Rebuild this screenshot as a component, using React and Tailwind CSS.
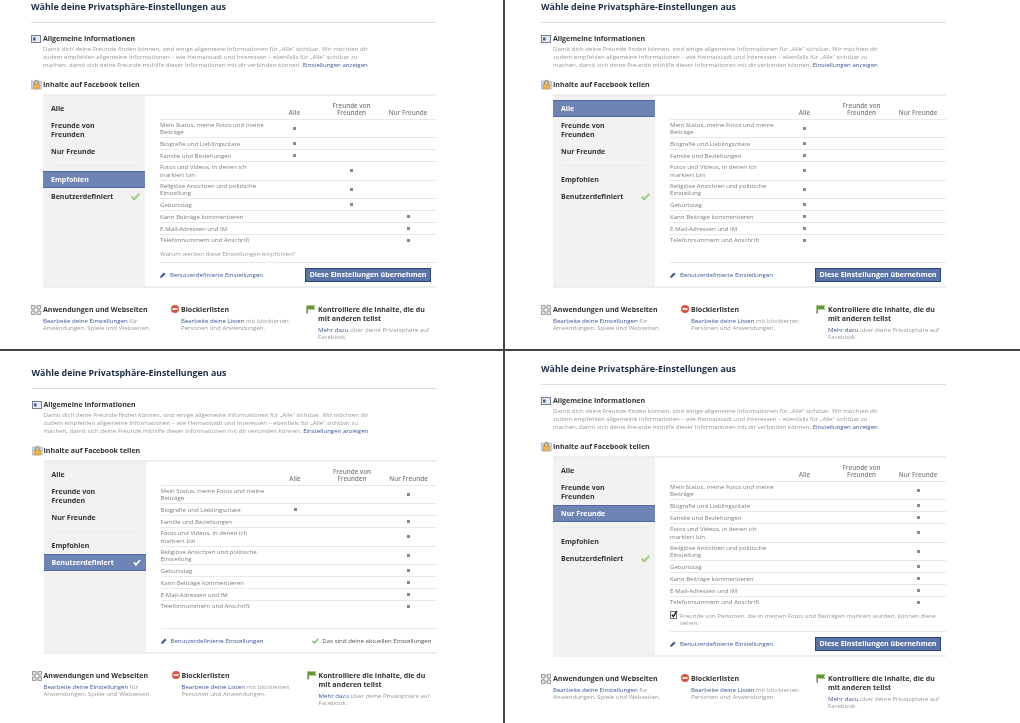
const font = { fontFamily: '"Open Sans", sans-serif' };

const rows = [
  { label: ["Mein Status, meine Fotos und meine", "Beiträge"] },
  { label: ["Biografie und Lieblingszitate"] },
  { label: ["Familie und Beziehungen"] },
  { label: ["Fotos und Videos, in denen ich", "markiert bin"] },
  { label: ["Religiöse Ansichten und politische", "Einstellung"] },
  { label: ["Geburtstag"] },
  { label: ["Kann Beiträge kommentieren"] },
  { label: ["E-Mail-Adressen und IM"] },
  { label: ["Telefonnummern und Anschrift"] },
];

function InfoIcon() {
  return (
    <svg width="10" height="8" viewBox="0 0 10 8" className="shrink-0">
      <rect x="0.5" y="0.5" width="9" height="7" fill="#e8ebf2" stroke="#777f8c" />
      <rect x="2" y="2.5" width="2.5" height="3" fill="#3b5998" />
    </svg>
  );
}

function LockIcon() {
  return (
    <svg width="11" height="11" viewBox="0 0 11 11" className="shrink-0">
      <rect x="0.3" y="2" width="10" height="8" fill="#c4d3ea" stroke="#93a8c9" strokeWidth="0.5" />
      <path d="M3.7 5V3a1.7 1.7 0 0 1 3.4 0V5" fill="none" stroke="#a9802f" strokeWidth="1" />
      <rect x="2.4" y="5" width="6" height="5" fill="#eeb24a" stroke="#c48a25" strokeWidth="0.5" />
    </svg>
  );
}

function AppsIcon() {
  return (
    <svg width="10" height="10" viewBox="0 0 10 10" className="shrink-0">
      <path d="M0.5 0.5h3.5v3.5h-3.5zM6 0.5h3.5v3.5H6zM0.5 6h3.5v3.5h-3.5zM6 6h3.5v3.5H6z" fill="#e6e6e6" stroke="#888" strokeWidth="0.8" />
      <path d="M4 2h2M2 4v2M8 4v2M4 8h2" stroke="#a8a8a8" strokeWidth="1.2" />
    </svg>
  );
}

function BlockIcon() {
  return (
    <svg width="8" height="8" viewBox="0 0 8 8" className="shrink-0">
      <circle cx="4" cy="4" r="4" fill="#d8553f" />
      <rect x="1.4" y="3.2" width="5.2" height="1.6" fill="#fff" />
    </svg>
  );
}

function FlagIcon() {
  return (
    <svg width="10" height="9" viewBox="0 0 10 9" className="shrink-0">
      <path d="M1 0.5h8.5l-1.6 2 1.6 2H2.4" fill="#5f9a2f" />
      <rect x="0.4" y="0.5" width="1.6" height="8" fill="#7a8a4a" />
    </svg>
  );
}

function PencilIcon() {
  return (
    <svg width="6" height="6" viewBox="0 0 6 6" className="shrink-0">
      <path d="M0 6l.5-2L4 .5 5.5 2 2 5.5z" fill="#3b5998" />
    </svg>
  );
}

// sidebar check has a pale centre, the footer one is solid
function GreenCheck({ size = 9, pale }) {
  return (
    <svg width={size} height={size * 0.8} viewBox="0 0 10 8" className="shrink-0">
      <path d="M1 4l2.5 3L9.2 1" fill="none" stroke="#86c466" strokeWidth="2.2" />
      {pale && <path d="M1.4 4.2l2.1 2.4L8.8 1.3" fill="none" stroke="#d4edc4" strokeWidth="0.7" />}
    </svg>
  );
}

function WhiteCheck() {
  return (
    <svg width="8" height="7" viewBox="0 0 8 7" className="shrink-0">
      <path d="M1 3.5l2 2.4L7 1" fill="none" stroke="#fff" strokeWidth="1.7" />
    </svg>
  );
}

function CheckedBox() {
  return (
    <svg width="8" height="9" viewBox="0 0 8 9" className="mt-[-2px] shrink-0">
      <rect x="0.5" y="1.5" width="6" height="7" fill="#fff" stroke="#777" />
      <path d="M1.8 4.6l1.6 2L6.8 1" fill="none" stroke="#111" strokeWidth="1.3" />
    </svg>
  );
}

function Row({ label, col }) {
  const two = label.length > 1;
  return (
    <div className={`grid grid-cols-[106px_57px_57px_56px] items-center border-t border-[#e9e9e9] text-[#808080] ${two ? "h-[18.7px]" : "h-[11.8px]"}`}>
      <div className="text-[6.1px] leading-[7.4px] whitespace-nowrap">
        {label.map((l) => (
          <div key={l}>{l}</div>
        ))}
      </div>
      {[0, 1, 2].map((i) => (
        <div key={i} className="flex justify-center">
          {col === i && <span className="h-[3px] w-[3px] bg-[#8a8a8a]" />}
        </div>
      ))}
    </div>
  );
}

function SideItem({ name, active, mark }) {
  return (
    <div className={`flex items-center justify-between border-y py-[3px] pl-2 pr-[5px] text-[7px] font-bold leading-[9px] ${active ? "border-[#4f6aa3] bg-[#6d84b4] text-white" : "border-transparent text-[#333]"}`}>
      <span className="whitespace-pre-line">{name}</span>
      {mark === "green" && <GreenCheck pale />}
      {mark === "white" && <WhiteCheck />}
    </div>
  );
}

function Panel({ pad, selected, cols, note, footer }) {
  const mark = selected === "Benutzerdefiniert" ? "white" : "green";
  return (
    <div className={pad} style={font}>
      <div className="w-[405px]">
        <h1 className="text-[8.9px] font-bold leading-[14px] text-[#1c2a47]">Wähle deine Privatsphäre-Einstellungen aus</h1>
        <div className="mt-2 h-px bg-[#dddddd]" />

        <div className="mt-[11px] flex items-center gap-[2px] text-[7px] font-bold leading-[9px] text-[#333]">
          <InfoIcon />
          Allgemeine Informationen
        </div>
        <p className="mt-[2px] whitespace-nowrap pl-3 text-[6.1px] leading-[8.2px] text-[#999]">
          Damit dich deine Freunde finden können, sind einige allgemeine Informationen für „Alle“ sichtbar. Wir möchten dir<br />
          zudem empfehlen allgemeine Informationen – wie Heimatstadt und Interessen – ebenfalls für „Alle“ sichtbar zu<br />
          machen, damit sich deine Freunde mithilfe dieser Informationen mit dir verbinden können. <span className="text-[#3b5998]">Einstellungen anzeigen</span>
        </p>

        <div className="mt-[9px] flex items-center gap-[1px] text-[7.1px] font-bold leading-[9px] text-[#333]">
          <LockIcon />
          Inhalte auf Facebook teilen
        </div>

        <div className="ml-3 mt-[4px] flex border-y-2 border-[#eeeeee]">
          <div className="w-[102px] bg-[#f2f2f2] pt-1">
            <SideItem name="Alle" active={selected === "Alle"} />
            <SideItem name={"Freunde von\nFreunden"} active={selected === "Freunde"} />
            <SideItem name="Nur Freunde" active={selected === "Nur"} />
            <div className="mx-2 my-[5px] h-px bg-[#e9e9e9]" />
            <SideItem name="Empfohlen" active={selected === "Empfohlen"} />
            <SideItem name="Benutzerdefiniert" active={selected === "Benutzerdefiniert"} mark={mark} />
          </div>

          <div className="flex-1 pl-[15px]">
            <div className="grid h-[23px] grid-cols-[106px_57px_57px_56px] items-end pb-[3px] text-center text-[6.3px] font-semibold leading-[7px] text-[#808080]">
              <span />
              <span>Alle</span>
              <span>Freunde von<br />Freunden</span>
              <span>Nur Freunde</span>
            </div>
            {rows.map((r, i) => (
              <Row key={i} label={r.label} col={cols[i]} />
            ))}

            {note === "checkbox" ? (
              <div className="flex h-[24px] gap-[2px] pt-[5px] text-[6.1px] leading-[7px] text-[#999]">
                <CheckedBox />
                <span className="whitespace-nowrap">Freunde von Personen, die in meinen Fotos und Beiträgen markiert wurden, können diese<br />sehen.</span>
              </div>
            ) : (
              <div className="flex h-[17px] items-center text-[6.1px] text-[#a0a0a0]">
                {note === "why" && "Warum werden diese Einstellungen empfohlen?"}
              </div>
            )}

            <div className="flex h-[24px] items-center justify-between border-t border-[#e9e9e9] pr-[5px]">
              <a className="flex items-center gap-[4px] text-[6.1px] text-[#3b5998]">
                <PencilIcon />
                Benutzerdefinierte Einstellungen
              </a>
              {footer === "button" ? (
                <button className="h-[14px] w-[126px] whitespace-nowrap border border-[#29447e] bg-[#5b74a8] text-center text-[7.1px] font-bold leading-[11px] text-white">
                  Diese Einstellungen übernehmen
                </button>
              ) : (
                <span className="flex items-center gap-[3px] text-[6.1px] text-[#555]">
                  <GreenCheck size={7} />
                  Das sind deine aktuellen Einstellungen
                </span>
              )}
            </div>
          </div>
        </div>

        <div className="mt-[17px] grid grid-cols-[140px_135px_130px] whitespace-nowrap text-[6.1px] leading-[7px] text-[#999]">
          <div className="flex">
            <div className="w-3"><AppsIcon /></div>
            <div>
              <div className="text-[7px] font-bold leading-[9px] text-[#333]">Anwendungen und Webseiten</div>
              <div className="mt-[2.5px]"><span className="text-[#3b5998]">Bearbeite deine Einstellungen</span> für<br />Anwendungen, Spiele und Webseiten.</div>
            </div>
          </div>
          <div className="flex">
            <div className="w-[10px]"><BlockIcon /></div>
            <div>
              <div className="text-[7px] font-bold leading-[9px] text-[#333]">Blockierlisten</div>
              <div className="mt-[2.5px]"><span className="text-[#3b5998]">Bearbeite deine Listen</span> mit blockierten<br />Personen und Anwendungen.</div>
            </div>
          </div>
          <div className="flex">
            <div className="w-3"><FlagIcon /></div>
            <div>
              <div className="text-[7px] font-bold leading-[9px] text-[#333]">Kontrolliere die Inhalte, die du<br />mit anderen teilst</div>
              <div className="mt-[2.5px]"><span className="text-[#3b5998]">Mehr dazu</span> über deine Privatsphäre auf<br />Facebook.</div>
            </div>
          </div>
        </div>
      </div>
    </div>
  );
}

export default function App() {
  return (
    <div className="grid h-[723px] w-[1020px] grid-cols-[505px_515px] grid-rows-[351px_372px] overflow-hidden bg-white blur-[0.3px]">
      <div className="border-b-2 border-r-2 border-[#444]">
        <Panel pad="pl-[31px]" selected="Empfohlen" cols={[0, 0, 0, 1, 1, 1, 2, 2, 2]} note="why" footer="button" />
      </div>
      <div className="border-b-2 border-[#444]">
        <Panel pad="pl-[36px]" selected="Alle" cols={[0, 0, 0, 0, 0, 0, 0, 0, 0]} footer="button" />
      </div>
      <div className="border-r-2 border-[#444]">
        <Panel pad="pl-[31.5px] pt-[15px]" selected="Benutzerdefiniert" cols={[2, 0, 2, 2, 2, 2, 2, 2, 2]} footer="current" />
      </div>
      <div>
        <Panel pad="pl-[36px] pt-[11px]" selected="Nur" cols={[2, 2, 2, 2, 2, 2, 2, 2, 2]} note="checkbox" footer="button" />
      </div>
    </div>
  );
}
